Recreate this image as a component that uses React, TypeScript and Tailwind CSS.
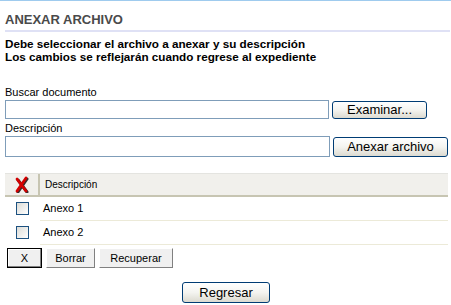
import React from 'react'

function RedX() {
  return (
    <svg width="16" height="17" viewBox="0 0 16 17">
      <path d="M3 3 L12 15 M12 2 L3 15" stroke="#3a2a2a" strokeWidth="3" strokeLinecap="round" transform="translate(1,1)" />
      <path d="M3 3 L12 15 M12 2 L3 15" stroke="#d40000" strokeWidth="2.8" strokeLinecap="round" />
    </svg>
  )
}

function Checkbox() {
  return (
    <span className="block h-[13px] w-[13px] border border-[#1c5180] bg-gradient-to-br from-[#dcdcd7] to-white" />
  )
}

function XpButton({ label, className }: { label: string; className: string }) {
  return (
    <button
      className={
        'flex items-center justify-center rounded-[3px] border border-[#003c74] bg-gradient-to-b from-white via-[#f4f4f0] to-[#dcdad0] text-[13px] text-black ' +
        className
      }
    >
      {label}
    </button>
  )
}

function ClassicButton({ label, className }: { label: string; className: string }) {
  return (
    <button
      className={
        'flex items-center justify-center border border-t-white border-l-white border-r-[#808080] border-b-[#808080] bg-[#f0f0f0] text-[11px] text-black ' +
        className
      }
    >
      {label}
    </button>
  )
}

export default function App() {
  return (
    <div className="h-[305px] w-[451px] overflow-hidden border-t border-[#9fcbee] bg-white font-['Liberation_Sans',Arial,sans-serif] text-black">
      <div className="pl-[5px] pr-px">
        <h1 className="mt-[10px] h-[19px] text-[13px] font-bold leading-[17px] text-[#4a4a4a]">ANEXAR ARCHIVO</h1>
        <div className="h-[2px] bg-[#dfe1f5]" />

        <div className="mt-[5px] text-[11.7px] font-bold leading-[13px]">
          <p>Debe seleccionar el archivo a anexar y su descripción</p>
          <p>Los cambios se reflejarán cuando regrese al expediente</p>
        </div>

        <div className="mt-[23px] text-[11px] leading-[13px]">Buscar documento</div>
        <div className="mt-[1px] flex items-center gap-[3px]">
          <div className="h-[19px] w-[324px] border border-[#7f9db9] bg-white" />
          <XpButton label="Examinar..." className="h-[18px] w-[95px]" />
        </div>

        <div className="mt-[3px] text-[11px] leading-[13px]">Descripción</div>
        <div className="mt-[1px] flex items-center gap-[3px]">
          <div className="h-[21px] w-[325px] border border-[#7f9db9] bg-white" />
          <XpButton label="Anexar archivo" className="h-[20px] w-[115px]" />
        </div>

        <div className="mt-[16px] w-[443px] text-[11px]">
          <div className="flex h-[24px] border-t border-b-2 border-t-[#e4e4e0] border-b-[#c7c5b2] bg-[#f1f0ec]">
            <div className="flex w-[35px] items-center justify-center border-r-2 border-[#c7c5b2]">
              <RedX />
            </div>
            <div className="flex items-center pl-[5px] text-[10px]">Descripción</div>
          </div>
          {['Anexo 1', 'Anexo 2'].map((name) => (
            <div key={name} className="flex h-[24px]">
              <div className="flex w-[35px] items-center justify-center pb-[2px]">
                <Checkbox />
              </div>
              <div className="flex flex-1 items-center border-b border-[#ecead8] pl-[3px] text-[11px]">{name}</div>
            </div>
          ))}
        </div>

        <div className="mt-[3px] flex gap-[4px] pl-[2px]">
          <ClassicButton label="X" className="h-[20px] w-[35px] !border-black shadow-[inset_-1px_-1px_0_#808080,inset_1px_1px_0_#fff]" />
          <ClassicButton label="Borrar" className="h-[20px] w-[49px]" />
          <ClassicButton label="Recuperar" className="h-[20px] w-[74px]" />
        </div>

        <div className="mt-[14px] flex justify-center pr-[3px]">
          <XpButton label="Regresar" className="h-[21px] w-[88px]" />
        </div>
      </div>
    </div>
  )
}
